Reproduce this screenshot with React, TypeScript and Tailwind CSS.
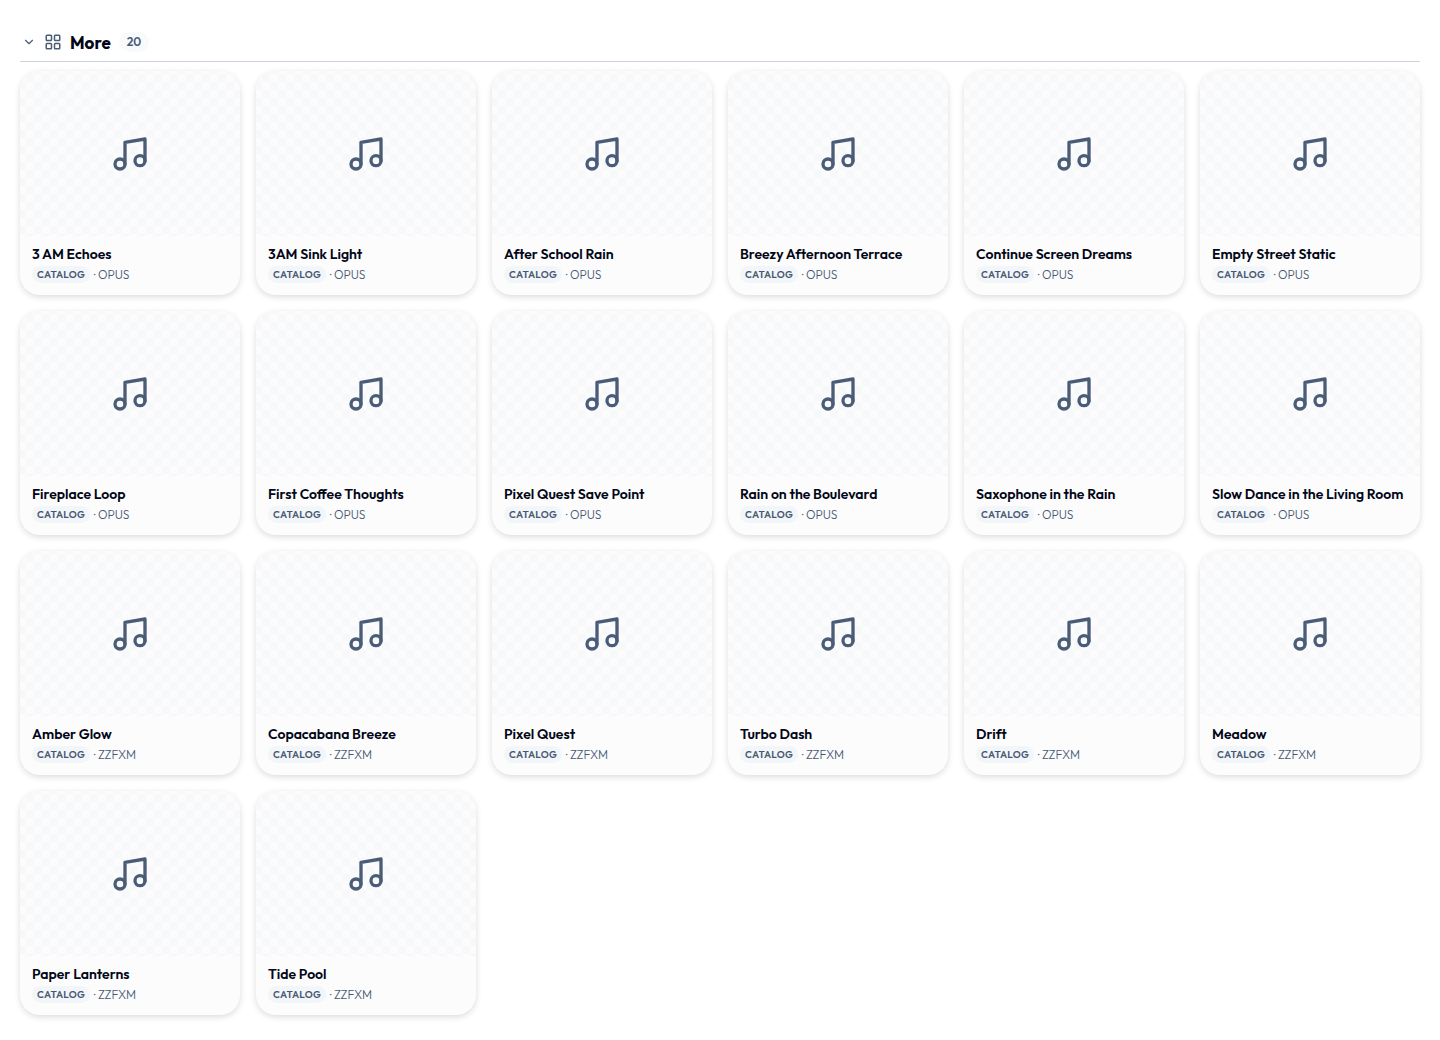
import { ChevronDown, LayoutGrid, Music } from 'lucide-react';
import { useState } from 'react';

type Track = {
  title: string;
  format: 'OPUS' | 'ZZFXM';
};

const tracks: Track[] = [
  { title: '3 AM Echoes', format: 'OPUS' },
  { title: '3AM Sink Light', format: 'OPUS' },
  { title: 'After School Rain', format: 'OPUS' },
  { title: 'Breezy Afternoon Terrace', format: 'OPUS' },
  { title: 'Continue Screen Dreams', format: 'OPUS' },
  { title: 'Empty Street Static', format: 'OPUS' },
  { title: 'Fireplace Loop', format: 'OPUS' },
  { title: 'First Coffee Thoughts', format: 'OPUS' },
  { title: 'Pixel Quest Save Point', format: 'OPUS' },
  { title: 'Rain on the Boulevard', format: 'OPUS' },
  { title: 'Saxophone in the Rain', format: 'OPUS' },
  { title: 'Slow Dance in the Living Room', format: 'OPUS' },
  { title: 'Amber Glow', format: 'ZZFXM' },
  { title: 'Copacabana Breeze', format: 'ZZFXM' },
  { title: 'Pixel Quest', format: 'ZZFXM' },
  { title: 'Turbo Dash', format: 'ZZFXM' },
  { title: 'Drift', format: 'ZZFXM' },
  { title: 'Meadow', format: 'ZZFXM' },
  { title: 'Paper Lanterns', format: 'ZZFXM' },
  { title: 'Tide Pool', format: 'ZZFXM' },
];

function TrackCard({ track }: { track: Track }) {
  return (
    <li className="overflow-hidden rounded-[20px] bg-[#fcfcfd] shadow-[0_2px_6px_rgba(0,0,0,0.14)]">
      <div className="flex aspect-4/3 items-center justify-center bg-[repeating-conic-gradient(#f7f8fa_0_25%,#fcfcfd_0_50%)] bg-[length:16px_16px] bg-center">
        <Music className="h-10 w-10 text-[#4a5c78]" />
      </div>
      <div className="px-3 pt-2 pb-3">
        <h3 className="truncate text-sm leading-5 font-semibold">{track.title}</h3>
        <p className="mt-0.5 flex items-end gap-1 text-xs leading-4 font-light text-[#475872]">
          <span className="rounded-full bg-[#f3f6f9] px-[5px] text-[10px] leading-[17px] font-semibold tracking-wide">
            CATALOG
          </span>
          <span>· {track.format}</span>
        </p>
      </div>
    </li>
  );
}

export default function App() {
  const [open, setOpen] = useState(true);

  return (
    <main className="min-h-screen bg-white p-5 font-['Outfit','Lato',sans-serif] text-[#020617]">
      <section>
        <h2 className="border-b border-[#cbd5e1]">
          <button
            type="button"
            aria-expanded={open}
            onClick={() => setOpen(!open)}
            className="flex w-full items-center gap-2 px-0.5 pt-2 pb-[5px] text-left">
            <ChevronDown className="h-3.5 w-3.5 text-[#4a5c78]" />
            <LayoutGrid className="h-4.5 w-4.5 text-[#4a5c78]" />
            <span className="pt-px text-[17px] leading-[27px] font-bold">More</span>
            <span className="rounded-full bg-[#f8fafc] px-2 text-xs leading-5 font-semibold text-[#4a5c78]">
              {tracks.length}
            </span>
          </button>
        </h2>
        {open && (
          <ul className="mt-[9px] grid grid-cols-[repeat(auto-fill,minmax(200px,1fr))] gap-4">
            {tracks.map((track) => (
              <TrackCard key={track.title} track={track} />
            ))}
          </ul>
        )}
      </section>
    </main>
  );
}
